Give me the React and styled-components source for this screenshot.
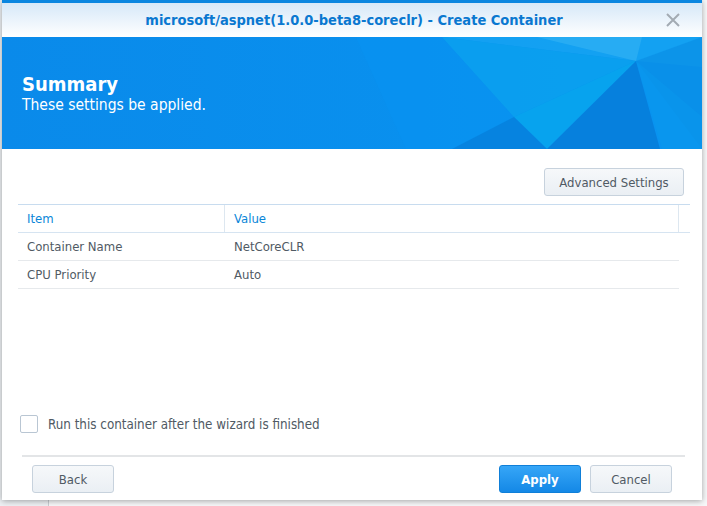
import React from "react";
import styled, { createGlobalStyle } from "styled-components";

const GlobalStyle = createGlobalStyle`
  html, body {
    margin: 0;
    padding: 0;
    background: #eef1f4;
    font-family: "DejaVu Sans Condensed", "DejaVu Sans", sans-serif;
  }
`;

const Page = styled.div`
  position: relative;
  width: 707px;
  height: 506px;
  overflow: hidden;
  background: linear-gradient(to right, #eef1f4 0, #eef1f4 48px, #c9ced3 48px, #c9ced3 49px, #f7f8f9 49px);
`;

const Window = styled.div`
  position: relative;
  margin-left: 2px;
  width: 700px;
  height: 500px;
  display: flex;
  flex-direction: column;
  background: #fff;
  box-shadow: 0 1px 6px rgba(0, 0, 0, 0.35);
`;

const TitleBar = styled.div`
  height: 34px;
  border-top: 3px solid #0a86e0;
  background: linear-gradient(to bottom, #d6e8f8, #ffffff);
  display: flex;
  align-items: center;
  justify-content: center;
  position: relative;
`;

const Title = styled.div`
  color: #0a78d0;
  font-weight: bold;
  font-size: 14.5px;
  margin-left: 4px;
`;

const Close = styled.button`
  all: unset;
  position: absolute;
  right: 22px;
  top: 10px;
  width: 14px;
  height: 14px;
  display: flex;
  cursor: pointer;
`;

const Banner = styled.div`
  position: relative;
  height: 112px;
  background: #0a8cec;
  overflow: hidden;
  color: #fff;
  display: flex;
  flex-direction: column;
  justify-content: center;
  padding-left: 20px;
`;

const BannerArt = styled.svg`
  position: absolute;
  inset: 0;
  width: 100%;
  height: 100%;
`;

const Heading = styled.div`
  position: relative;
  font-size: 20px;
  font-weight: bold;
`;

const Sub = styled.div`
  position: relative;
  font-size: 15.5px;
`;

const Body = styled.div`
  flex: 1;
  display: flex;
  flex-direction: column;
  padding: 19px 12px 0 16px;
`;

const ToolRow = styled.div`
  display: flex;
  justify-content: flex-end;
  padding-right: 6px;
`;

const Button = styled.button`
  height: 28px;
  min-width: ${(p) => p.$w || 82}px;
  padding: 0 14px;
  border-radius: 3px;
  border: 1px solid ${(p) => (p.$primary ? "#0f7fd8" : "#c7d2dd")};
  background: ${(p) =>
    p.$primary
      ? "linear-gradient(to bottom, #36a6f7, #1488e6)"
      : "linear-gradient(to bottom, #f6f8fa, #eaeff4)"};
  color: ${(p) => (p.$primary ? "#fff" : "#505a64")};
  font-family: inherit;
  font-size: 13px;
  font-weight: ${(p) => (p.$primary ? "bold" : "normal")};
  cursor: pointer;
`;

const Table = styled.div`
  margin-top: 8px;
  border-top: 1px solid #c8dcef;
`;

const Row = styled.div`
  display: grid;
  grid-template-columns: ${(p) => (p.$head ? "207px 1fr 11px" : "207px 1fr")};
  height: 27px;
  border-bottom: 1px solid ${(p) => (p.$head ? "#d6e4f1" : "#e6e9ec")};
  margin-right: ${(p) => (p.$head ? 0 : 11)}px;
`;

const Cell = styled.div`
  display: flex;
  align-items: center;
  padding-left: 9px;
  padding-bottom: 1px;
  font-size: 13px;
  color: ${(p) => (p.$head ? "#0a86d8" : "#505a64")};
  border-right: ${(p) => (p.$divide ? "1px solid #dde7f0" : "none")};
`;

const CheckRow = styled.label`
  margin-top: auto;
  margin-bottom: 22px;
  margin-left: 2px;
  display: flex;
  align-items: center;
  gap: 10px;
  font-size: 13.3px;
  color: #505a64;
`;

const Box = styled.span`
  width: 16px;
  height: 16px;
  border: 1px solid #b9c6d3;
  border-radius: 2px;
  background: #fff;
`;

const Footer = styled.div`
  margin: 0 17px 0 20px;
  border-top: 2px solid #e3e5e7;
  padding: 8px 13px 7px 10px;
  display: flex;
  gap: 9px;
  & > :first-child {
    margin-right: auto;
  }
`;

export default function App() {
  return (
    <Page>
      <GlobalStyle />
      <Window>
        <TitleBar>
          <Title>microsoft/aspnet(1.0.0-beta8-coreclr) - Create Container</Title>
          <Close aria-label="close">
            <svg width="14" height="14" viewBox="0 0 14 14">
              <path d="M1 1L13 13M13 1L1 13" stroke="#a3abb3" strokeWidth="2" />
            </svg>
          </Close>
        </TitleBar>
        <Banner>
          <BannerArt viewBox="0 0 700 112" preserveAspectRatio="none">
            <defs>
              <linearGradient id="base" x1="0" y1="0" x2="1" y2="0">
                <stop offset="0" stopColor="#0a8aea" />
                <stop offset="0.6" stopColor="#0990ee" />
                <stop offset="1" stopColor="#0a96ee" />
              </linearGradient>
            </defs>
            <rect width="700" height="112" fill="url(#base)" />
            <polygon points="354,0 404,112 700,112 700,0" fill="#0893f2" opacity="0.6" />
            <polygon points="440,0 700,0 700,30 634,24" fill="#18a6f2" opacity="0.7" />
            <polygon points="535,0 640,0 634,24" fill="#35b4f4" opacity="0.6" />
            <polygon points="440,0 634,24 512,80" fill="#0ca4ee" opacity="0.7" />
            <polygon points="512,80 634,24 545,112" fill="#08a8ee" opacity="0.8" />
            <polygon points="512,80 545,112 450,112" fill="#0680dc" opacity="0.8" />
            <polygon points="634,24 658,112 545,112" fill="#067cd8" opacity="0.8" />
            <polygon points="634,24 700,0 700,112" fill="#0a8fe6" opacity="0.7" />
            <polygon points="634,24 660,112 700,112 700,80" fill="#0a98ec" opacity="0.6" />
          </BannerArt>
          <Heading>Summary</Heading>
          <Sub>These settings be applied.</Sub>
        </Banner>
        <Body>
          <ToolRow>
            <Button $w={140}>Advanced Settings</Button>
          </ToolRow>
          <Table>
            <Row $head>
              <Cell $head $divide>Item</Cell>
              <Cell $head $divide>Value</Cell>
              <Cell $head />
            </Row>
            <Row>
              <Cell>Container Name</Cell>
              <Cell>NetCoreCLR</Cell>
            </Row>
            <Row>
              <Cell>CPU Priority</Cell>
              <Cell>Auto</Cell>
            </Row>
          </Table>
          <CheckRow>
            <Box />
            Run this container after the wizard is finished
          </CheckRow>
        </Body>
        <Footer>
          <Button>Back</Button>
          <Button $primary>Apply</Button>
          <Button>Cancel</Button>
        </Footer>
      </Window>
    </Page>
  );
}
